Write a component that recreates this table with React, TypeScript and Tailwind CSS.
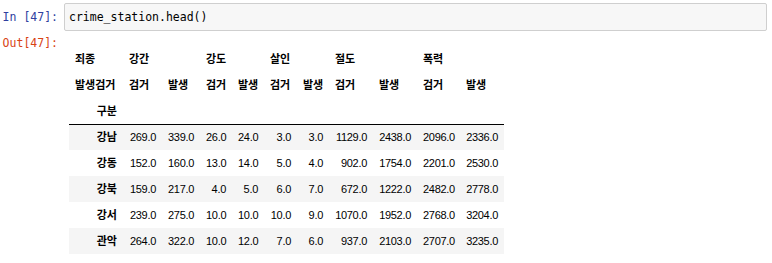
const cols = [54, 39, 38, 32, 32, 33, 32, 44, 44, 43, 44]

const rows: [string, string[]][] = [
  ["강남", ["269.0", "339.0", "26.0", "24.0", "3.0", "3.0", "1129.0", "2438.0", "2096.0", "2336.0"]],
  ["강동", ["152.0", "160.0", "13.0", "14.0", "5.0", "4.0", "902.0", "1754.0", "2201.0", "2530.0"]],
  ["강북", ["159.0", "217.0", "4.0", "5.0", "6.0", "7.0", "672.0", "1222.0", "2482.0", "2778.0"]],
  ["강서", ["239.0", "275.0", "10.0", "10.0", "10.0", "9.0", "1070.0", "1952.0", "2768.0", "3204.0"]],
  ["관악", ["264.0", "322.0", "10.0", "12.0", "7.0", "6.0", "937.0", "2103.0", "2707.0", "3235.0"]],
]

const th = "px-[6px] py-0 font-bold text-[11px] leading-[14px] text-black whitespace-nowrap align-middle"
const td = "px-[6px] py-0 text-right text-[11px] tracking-[-0.3px] leading-[14px] text-black whitespace-nowrap align-middle"

const App = () => {
  return (
    <div
      className="w-[772px] h-[263px] bg-white pt-[3px] overflow-hidden"
      style={{ fontFamily: '"Liberation Sans", "Noto Sans CJK KR", sans-serif' }}
    >
      {/* Input cell */}
      <div className="flex">
        <div className="w-[64px] pr-[6px] text-right text-[11.5px] leading-[28px] text-[#303F9F] font-['DejaVu_Sans_Mono',monospace] whitespace-pre">
          In [47]:
        </div>
        <div className="w-[703px] h-[28px] border border-[#cfcfcf] bg-[#f7f7f7] rounded-[2px] pl-[4px] text-[11.5px] leading-[26px] text-black font-['DejaVu_Sans_Mono',monospace]">
          crime_station.head()
        </div>
      </div>

      {/* Output cell */}
      <div className="flex mt-[5px]">
        <div className="w-[64px] pr-[6px] text-right text-[11.5px] leading-[14px] text-[#D84315] font-['DejaVu_Sans_Mono',monospace] whitespace-pre">
          Out[47]:
        </div>
        <div className="pl-[5px] pt-[10px]">
          <table className="table-fixed border-collapse w-[435px]">
            <colgroup>
              {cols.map((w, i) => (
                <col key={i} style={{ width: w }} />
              ))}
            </colgroup>
            <thead className="border-b border-black">
              <tr className="h-[26px]">
                <th className={th + " text-left"}>죄종</th>
                <th colSpan={2} className={th + " text-left"}>강간</th>
                <th colSpan={2} className={th + " text-left"}>강도</th>
                <th colSpan={2} className={th + " text-left"}>살인</th>
                <th colSpan={2} className={th + " text-left"}>절도</th>
                <th colSpan={2} className={th + " text-left"}>폭력</th>
              </tr>
              <tr className="h-[26px]">
                <th className={th + " text-left"}>발생검거</th>
                <th className={th + " text-left"}>검거</th>
                <th className={th + " text-left"}>발생</th>
                <th className={th + " text-left"}>검거</th>
                <th className={th + " text-left"}>발생</th>
                <th className={th + " text-left"}>검거</th>
                <th className={th + " text-left"}>발생</th>
                <th className={th + " text-left"}>검거</th>
                <th className={th + " text-left"}>발생</th>
                <th className={th + " text-left"}>검거</th>
                <th className={th + " text-left"}>발생</th>
              </tr>
              <tr className="h-[26px]">
                <th className={th + " text-right"}>구분</th>
                {cols.slice(1).map((_, i) => (
                  <th key={i} className={th}></th>
                ))}
              </tr>
            </thead>
            <tbody>
              {rows.map(([name, vals], i) => (
                <tr key={name} className={"h-[26px] " + (i % 2 === 0 ? "bg-[#f5f5f5]" : "bg-white")}>
                  <th className={th + " text-right"}>{name}</th>
                  {vals.map((v, j) => (
                    <td key={j} className={td}>{v}</td>
                  ))}
                </tr>
              ))}
            </tbody>
          </table>
        </div>
      </div>
    </div>
  )
}

export default App
